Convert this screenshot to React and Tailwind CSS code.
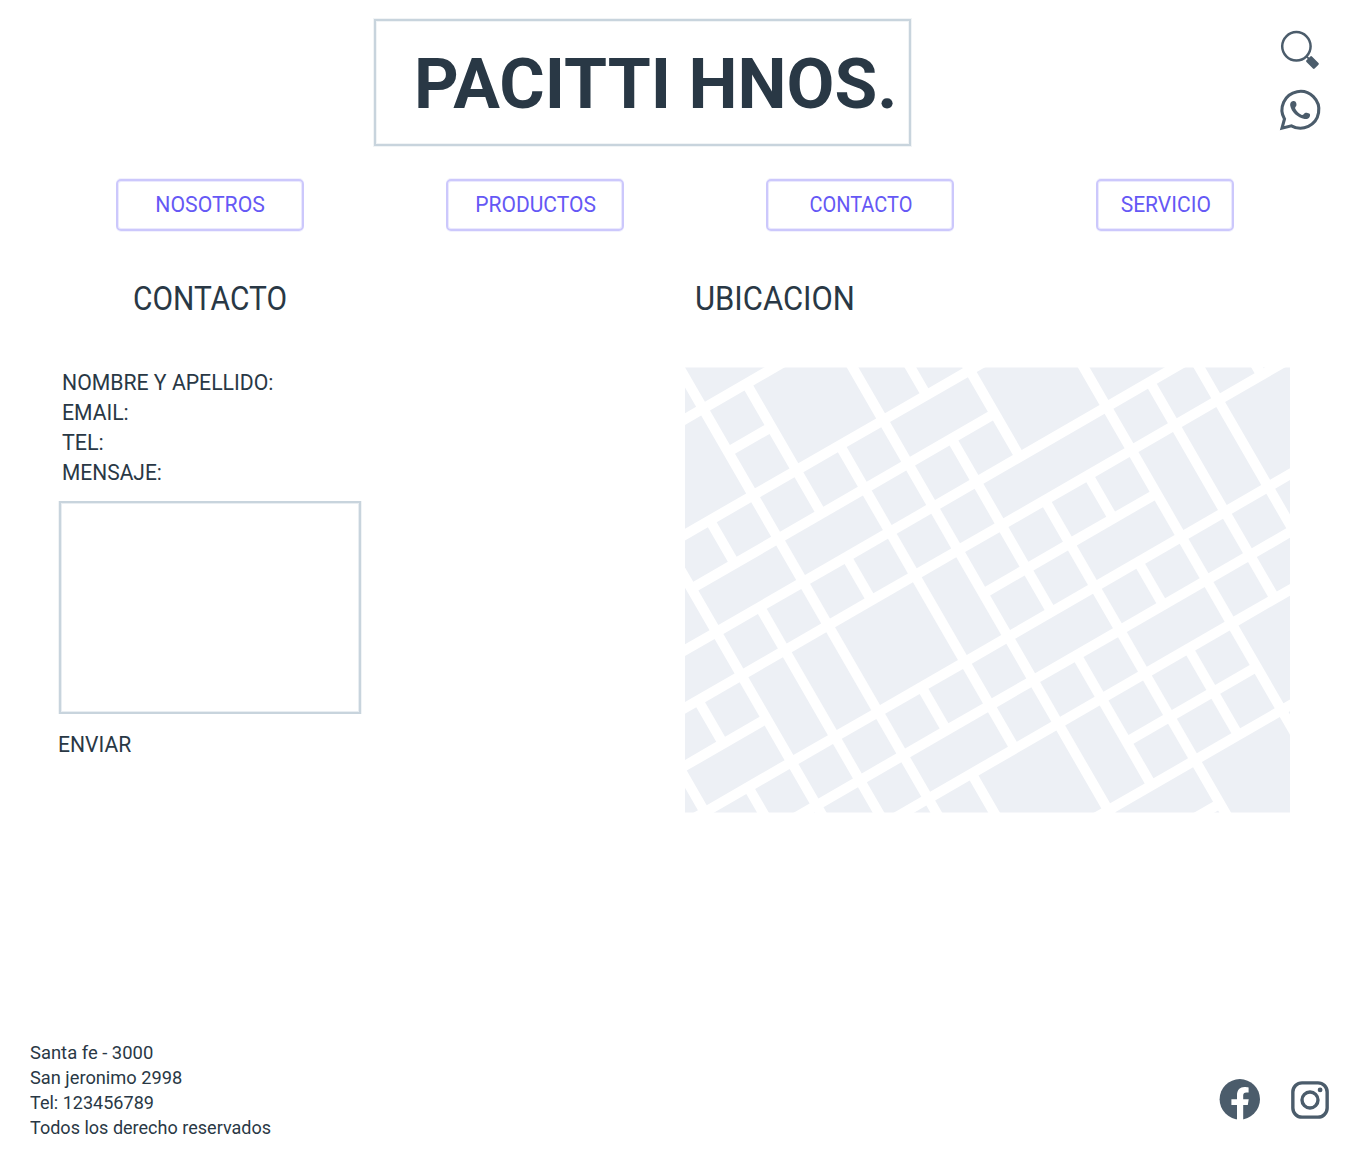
import React from "react";

const navItems = [
  { label: "NOSOTROS", box: "w-[188px]", text: "scale-x-[0.943]" },
  { label: "PRODUCTOS", box: "w-[178px]", text: "scale-x-[0.934] translate-x-[1px]" },
  { label: "CONTACTO", box: "w-[188px]", text: "scale-x-[0.888] translate-x-[1px]" },
  { label: "SERVICIO", box: "w-[138px]", text: "scale-x-[0.935] translate-x-[0.5px]" },
];

const fields = [
  { label: "NOMBRE Y APELLIDO:", text: "scale-x-[0.943]" },
  { label: "EMAIL:", text: "scale-x-[0.94]" },
  { label: "TEL:", text: "scale-x-[0.955]" },
  { label: "MENSAJE:", text: "scale-x-[0.932]" },
];

const footerLines = [
  { label: "Santa fe - 3000", text: "scale-x-[0.995]" },
  { label: "San jeronimo 2998", text: "scale-x-[0.986]" },
  { label: "Tel: 123456789", text: "scale-x-[0.975]" },
  { label: "Todos los derecho reservados", text: "scale-x-[0.975]" },
];

// City blocks on the rotated street grid: [column, row, columns, rows]
const blocks = [
  [0, -1, 2, 1], [-1, -1, 1, 1],
  [-2, 0, 2, 2], [0, 0, 1, 1], [0, 1, 1, 1], [1, 0, 2, 2], [3, 0, 1, 2], [4, 1, 1, 1],
  [-2, 2, 1, 1], [-1, 2, 1, 1], [0, 2, 1, 1], [1, 2, 1, 1], [2, 2, 1, 1], [3, 2, 2, 1], [5, 2, 2, 2], [7, 2, 2, 2],
  [-3, 2, 1, 2], [-2, 3, 2, 1], [0, 3, 2, 1], [2, 3, 1, 1], [3, 3, 1, 1], [4, 3, 1, 1],
  [-4, 4, 2, 1], [-2, 4, 1, 1], [-1, 4, 1, 1], [0, 4, 1, 1], [1, 4, 1, 1], [2, 4, 1, 1], [3, 4, 1, 1],
  [4, 4, 3, 1], [7, 4, 1, 1], [8, 4, 1, 1], [9, 4, 1, 1], [10, 4, 1, 1],
  [-4, 5, 1, 1], [-3, 5, 1, 1], [-2, 5, 1, 2], [-1, 5, 1, 2], [0, 5, 2, 2], [2, 5, 1, 2],
  [3, 5, 1, 1], [4, 5, 1, 1], [5, 5, 1, 1], [6, 5, 1, 1], [7, 5, 1, 2], [8, 5, 1, 2], [9, 5, 2, 2],
  [-5, 6, 1, 1], [-4, 6, 2, 1], [3, 6, 1, 1], [4, 6, 1, 1], [5, 6, 2, 1],
  [-4, 7, 1, 1], [-3, 7, 1, 1], [-2, 7, 1, 1], [-1, 7, 1, 1], [0, 7, 1, 1], [1, 7, 1, 1], [2, 7, 1, 1],
  [3, 7, 2, 1], [5, 7, 1, 1], [6, 7, 1, 1], [7, 7, 1, 1], [8, 7, 1, 1], [9, 7, 1, 1],
  [-3, 8, 1, 1], [-2, 8, 1, 1], [-1, 8, 1, 1], [0, 8, 2, 1], [2, 8, 1, 1], [3, 8, 1, 1], [4, 8, 1, 1],
  [5, 8, 2, 1], [7, 8, 1, 1], [8, 8, 1, 1],
  [-1, 9, 1, 1], [0, 9, 1, 1], [1, 9, 2, 2], [3, 9, 1, 2], [4, 9, 1, 1], [5, 9, 1, 1], [6, 9, 1, 1], [7, 9, 2, 2],
  [4, 10, 1, 1], [5, 10, 1, 1], [6, 10, 1, 1],
  [3, 11, 2, 1], [5, 11, 2, 2], [7, 11, 1, 1], [4, 12, 1, 1],
];

const STEP = 50.04;
const STREET = 10.15;

function CityMap() {
  return (
    <svg className="block h-[446px] w-[605px]" viewBox="685 367 605 446" role="img" aria-label="Mapa">
      <clipPath id="map-area">
        <rect x="685" y="367.5" width="605" height="445" />
      </clipPath>
      <g clipPath="url(#map-area)" fill="#edf0f5">
        <g transform="translate(680 360) rotate(-30)">
          {blocks.map(([c, r, w, h]) => (
            <rect
              key={`${c}:${r}`}
              x={0.72 + c * STEP}
              y={58.72 + r * STEP}
              width={w * STEP - STREET}
              height={h * STEP - STREET}
            />
          ))}
        </g>
      </g>
    </svg>
  );
}

function SearchIcon() {
  return (
    <svg className="block size-10" viewBox="0 0 40 40" aria-label="Buscar">
      <circle cx="16.4" cy="16.3" r="14.2" fill="none" stroke="currentColor" strokeWidth="2.5" />
      <path d="M26 25.9l3 3" stroke="currentColor" strokeWidth="2" />
      <rect x="-6" y="-3.9" width="11.6" height="7.8" rx="1.2" fill="currentColor" transform="translate(32.6 32.6) rotate(45)" />
    </svg>
  );
}

function WhatsappIcon() {
  return (
    <svg className="block size-10 overflow-visible" viewBox="0 0 40 40" aria-label="WhatsApp">
      <path
        d="M2 38.2L4.5 29A18.4 18.4 0 1 1 11.4 35.8Z"
        fill="none"
        stroke="currentColor"
        strokeWidth="3.1"
      />
      <path
        d="M13.2 11C14.8 10.7 15.8 11.6 16.2 13C16.6 14.5 16.7 15.6 15.6 16.8C14.9 17.7 15 18.3 15.6 19.2C17 21.5 19 23.5 21.4 24.7C22.3 25.2 22.9 25 23.7 24.2C24.8 22.8 26 22.6 27.5 22.9L29.2 23.5C30.2 24 30.3 25.2 29.8 26.4C28.9 28.5 26.9 29.4 24.6 29C17.5 27.8 11.3 22 10.2 15.6C9.8 13.2 11 11.4 13.2 11Z"
        fill="currentColor"
      />
    </svg>
  );
}

function FacebookIcon() {
  return (
    <svg className="block size-[41px]" viewBox="0 0 41 41" aria-label="Facebook">
      <circle cx="20.8" cy="20.3" r="20.2" fill="currentColor" />
      <path
        d="M18 41V26.1H12.4V20.2H18V16.2C18 11 21 8.1 25.6 8.1C27.2 8.1 28.8 8.3 29.6 8.5V13.5H27.4C25.2 13.5 24.2 14.7 24.2 16.4V20.2H29.7L28.8 26.1H24.2V41Z"
        fill="white"
      />
    </svg>
  );
}

function InstagramIcon() {
  return (
    <svg className="block size-[38px]" viewBox="0 0 38 38" aria-label="Instagram">
      <rect x="1.85" y="1.85" width="34.3" height="34.3" rx="9.2" fill="none" stroke="currentColor" strokeWidth="3.4" />
      <circle cx="19" cy="19" r="8" fill="none" stroke="currentColor" strokeWidth="3.4" />
      <circle cx="29.1" cy="8.9" r="2.4" fill="currentColor" />
    </svg>
  );
}

export default function App() {
  return (
    <div className="flex h-[1155px] w-[1350px] flex-col overflow-hidden bg-white font-['Roboto',sans-serif] text-[#293845]">
      <header className="flex h-[146px] justify-between pr-[30px] pl-[374px]">
        <div className="mt-[19px] flex h-[127px] w-[537px] items-center border-2 border-[#c8d4dd] pt-[3px] pl-[38px] shadow-[0_0_0_1px_#f1f4f6,inset_0_0_0_1px_#f1f4f6]">
          <h1 className="origin-left scale-x-[0.979] text-[71px] leading-[80px] font-bold whitespace-nowrap">PACITTI HNOS.</h1>
        </div>
        <div className="flex flex-col gap-5 pt-[30px] text-[#4b5c6b]">
          <SearchIcon />
          <WhatsappIcon />
        </div>
      </header>

      <nav className="mt-[33px] flex gap-[142px] pl-[116px]">
        {navItems.map((item) => (
          <a
            key={item.label}
            className={`flex h-[52px] items-center justify-center rounded-[5px] border-2 border-[#ccc8fc] pb-0.5 text-[22.5px] leading-[30px] text-[#6558f5] shadow-[0_1px_0_#f2f1fe,0_-1px_0_#f2f1fe,inset_0_0_0_1px_#ebe9fe] ${item.box}`}
          >
            <span className={`inline-block ${item.text}`}>{item.label}</span>
          </a>
        ))}
      </nav>

      <main className="mt-12 flex">
        <section className="w-[685px] pl-[59px]">
          <h2 className="ml-[74px] w-max origin-left scale-x-[0.906] text-[33px] leading-[40px]">CONTACTO</h2>
          <div className="mt-[48px] ml-[3.4px] flex flex-col items-start text-[22.5px] leading-[30px]">
            {fields.map((field) => (
              <label key={field.label} className={`origin-left ${field.text}`}>{field.label}</label>
            ))}
          </div>
          <div className="mt-[14px] h-[213px] w-[302px] border-2 border-[#c8d4dd] shadow-[1px_0_0_#f1f4f6,-1px_0_0_#f1f4f6,inset_0_0_0_1px_#e9eef2]" />
          <button className="mt-[15px] -ml-px block origin-left scale-x-[0.938] text-[22.5px] leading-[30px]">ENVIAR</button>
        </section>
        <section>
          <h2 className="ml-[9.5px] w-max origin-left scale-x-[0.938] text-[33px] leading-[40px]">UBICACION</h2>
          <div className="mt-12">
            <CityMap />
          </div>
        </section>
      </main>

      <footer className="mt-auto flex items-end justify-between pr-[21px] pb-[14px] pl-[30px]">
        <div className="flex flex-col items-start text-[18.5px] leading-[25px]">
          {footerLines.map((line) => (
            <p key={line.label} className={`origin-left ${line.text}`}>{line.label}</p>
          ))}
        </div>
        <div className="mb-[21px] flex items-center gap-[31px] text-[#4b5c6b]">
          <FacebookIcon />
          <InstagramIcon />
        </div>
      </footer>
    </div>
  );
}
